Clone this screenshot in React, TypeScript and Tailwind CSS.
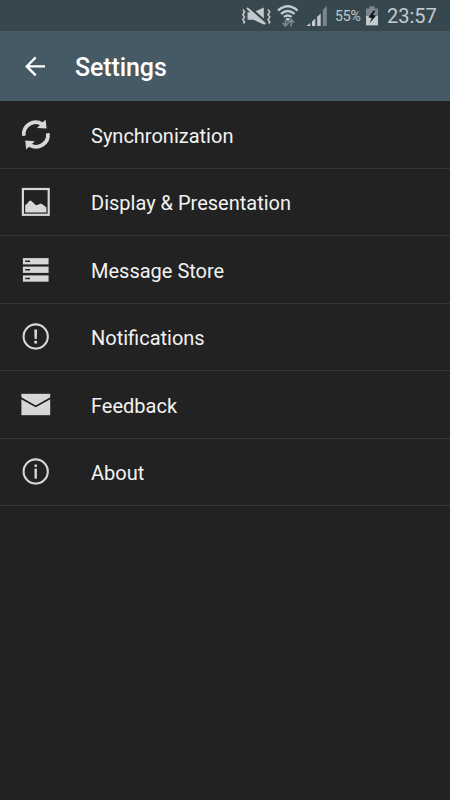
import React from 'react';

interface SettingsItem {
  label: string;
  icon: React.ReactNode;
}

const ITEMS: SettingsItem[] = [
  {
    label: 'Synchronization',
    icon: (
      <>
        <path d="M5.9 18.8A11.9 11.9 0 0 1 24.2 7.2" fill="none" stroke="currentColor" strokeWidth="3.8" />
        <path d="M27.6 2.4L28.6 11.6L19 10.9Z" />
        <path d="M29.8 16.2A11.9 11.9 0 0 1 11.5 27.8" fill="none" stroke="currentColor" strokeWidth="3.8" />
        <path d="M7.2 23.4L16.8 24.2L8.2 32.6Z" />
      </>
    ),
  },
  {
    label: 'Display & Presentation',
    icon: (
      <>
        <rect x="4.9" y="5" width="25.8" height="25.8" fill="none" stroke="currentColor" strokeWidth="2.2" />
        <path d="M7.2 21.2L9 19.8L11 17.2L12.8 16.4L15 18.4L18 21.2L20 20.8L22.7 19.6L25.5 21L28.4 23.6V28.4H7.2Z" />
      </>
    ),
  },
  {
    label: 'Message Store',
    icon: (
      <>
        <path d="M4.9 6.1H30.6V12.4H4.9Z" />
        <path d="M4.9 14.6H30.6V20.9H4.9Z" />
        <path d="M4.9 23.4H30.6V29.7H4.9Z" />
        <path d="M7.2 9.2H12M7.2 17.7H12M7.2 26.4H12" stroke="#222222" strokeWidth="1.5" />
      </>
    ),
  },
  {
    label: 'Notifications',
    icon: (
      <>
        <circle cx="17.7" cy="17.5" r="12.1" fill="none" stroke="currentColor" strokeWidth="2.1" />
        <path d="M16.3 10.4H19.1L18.8 20H16.6Z" />
        <path d="M16.3 21.8H19.1V24.5H16.3Z" />
      </>
    ),
  },
  {
    label: 'Feedback',
    icon: (
      <>
        <path d="M3.4 6.8H32.2V28.2H3.4Z" />
        <path d="M2.8 11L17.7 19.4L32.8 11" fill="none" stroke="#191919" strokeWidth="1.7" />
      </>
    ),
  },
  {
    label: 'About',
    icon: (
      <>
        <circle cx="17.7" cy="17.5" r="12.1" fill="none" stroke="currentColor" strokeWidth="2.1" />
        <path d="M16.5 10.5H18.9V13H16.5Z" />
        <path d="M16.5 14.6H18.9V24.6H16.5Z" />
      </>
    ),
  },
];

const StatusBar: React.FC = () => (
  <div className="h-[31px] bg-[#37474f] flex items-center justify-end pr-[13px] text-[#c3cace]">
    {/* Vibrate / muted */}
    <svg className="w-[30px] h-[22px] mr-[6px]" viewBox="0 0 30 22" fill="none" stroke="currentColor">
      <path d="M2 4.5L3.6 7L1.8 9.5L3.6 12L1.8 14.5L3.6 17L2.4 18.5M27 4.5L28.8 7L27 9.5L28.8 12L27 14.5L28.8 17L27.6 18.5" strokeWidth="1.5" />
      <path d="M6.5 7.2H12.5L22.8 2.4V19.6L12.5 14.8H6.5Z" fill="currentColor" stroke="none" />
      <path d="M7.6 1.8L25.4 17.4" stroke="#37474f" strokeWidth="2.6" />
      <path d="M6 3L24.2 19" strokeWidth="2.2" />
    </svg>
    {/* Wifi */}
    <svg className="w-[22px] h-[24px] mr-[7px]" viewBox="0 0 22 24" fill="none" stroke="currentColor">
      <path d="M1 6.6Q10.7 -2 20.6 6.6M4 9.9Q10.7 4.2 17.6 9.9M7 12.9Q10.7 10 14.6 12.9" strokeWidth="2.3" />
      <path d="M8.4 14.8Q10.8 13 13.2 14.8L10.8 17.2Z" fill="currentColor" stroke="none" />
      <path d="M8.6 16V21M5.6 18.8L8.6 22L11.4 18.8M14.2 22.5V16.5M11.6 18.6L14.2 15.6L17 18.6" stroke="#7c878d" strokeWidth="1.7" />
    </svg>
    {/* Signal strength */}
    <svg className="w-[22px] h-[22px] mr-[7px]" viewBox="0 0 22 22" fill="currentColor">
      <path d="M0.5 21L4.2 18V21ZM6 16.5L9.3 13.5V21H6ZM11.2 11.7L14.7 8.5V21H11.2Z" />
      <path d="M16.8 5L20.8 1V21H16.8Z" fill="#7c878d" />
    </svg>
    <span className="w-[27px] whitespace-nowrap text-[14px] leading-none tracking-[-0.1px] pt-[1px]">55%</span>
    {/* Battery */}
    <svg className="w-[14px] h-[20px] ml-[3px] mr-[8px]" viewBox="0 0 14 20" fill="currentColor">
      <path d="M4.5 0.2H9.5V2.5H13V19.3H1V2.5H4.5Z" fill="#7c878d" />
      <path d="M1 10H13V19.3H1Z" />
      <path d="M8.8 4.2L3.4 11.3L6.7 12.2L4.6 17.2L11 9.7L7.8 8.8L10.3 5Z" fill="#10191d" />
    </svg>
    <span className="w-[50px] whitespace-nowrap text-[20px] leading-none pt-[1px]">23:57</span>
  </div>
);

const AppBar: React.FC = () => (
  <header className="h-[70px] bg-[#455a64] flex items-center pl-[24px] text-white">
    <svg className="w-[22px] h-[22px] mr-[29px]" viewBox="0 0 22 22" fill="none" stroke="currentColor" strokeWidth="2.3">
      <path d="M21 11.4H3M11.7 2.4L2.7 11.4L11.7 20.4" />
    </svg>
    <h1 className="text-[25px] font-medium leading-none tracking-[-0.1px] pt-[3px]">Settings</h1>
  </header>
);

export default function App() {
  return (
    <div className="w-full h-screen bg-[#222222] overflow-hidden font-['Roboto',sans-serif]">
      <StatusBar />
      <AppBar />
      <ul>
        {ITEMS.map((item) => (
          <li key={item.label} className="h-[67.5px] flex items-center border-b border-[#373737] pl-[18px]">
            <svg className="w-[36px] h-[36px] mt-[1px] mr-[37px] text-[#d7d7d7]" viewBox="0 0 36 36" fill="currentColor">
              {item.icon}
            </svg>
            <span className="text-[20px] leading-none text-[#f2f2f2] pt-[3px]">{item.label}</span>
          </li>
        ))}
      </ul>
    </div>
  );
}
